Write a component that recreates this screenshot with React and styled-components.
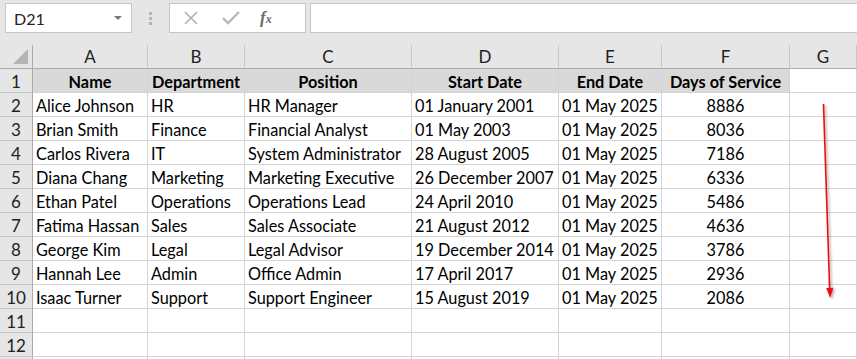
import React from "react";
import styled, { createGlobalStyle } from "styled-components";

const GlobalStyle = createGlobalStyle`
  html, body {
    margin: 0;
    padding: 0;
    background: #ffffff;
  }
  body {
    font-family: Lato, "Liberation Sans", sans-serif;
    color: #000;
    overflow: hidden;
  }
`;

const Page = styled.div`
  width: 857px;
  height: 359px;
  overflow: hidden;
  background: #fff;
`;

const Toolbar = styled.div`
  display: flex;
  align-items: flex-start;
  height: 45px;
  padding: 3px 0 0 5px;
  box-sizing: border-box;
  background: #e6e6e6;
`;

const NameBox = styled.div`
  display: flex;
  align-items: center;
  justify-content: space-between;
  width: 127px;
  height: 30px;
  box-sizing: border-box;
  padding: 0 8px 0 8px;
  background: #fff;
  border: 1px solid #c6c6c6;
  font-size: 16px;
  color: #222;
`;

const Caret = styled.span`
  width: 0;
  height: 0;
  border-left: 4px solid transparent;
  border-right: 4px solid transparent;
  border-top: 4px solid #7a7a7a;
  margin-right: 1px;
`;

const Grip = styled.div`
  display: flex;
  flex-direction: column;
  gap: 2px;
  margin: 9px 17px 0 17px;
  span {
    width: 3px;
    height: 3px;
    background: #b4b4b4;
  }
`;

const FxBox = styled.div`
  display: flex;
  align-items: center;
  width: 137px;
  height: 30px;
  box-sizing: border-box;
  background: #fff;
  border: 1px solid #c6c6c6;
  padding-left: 14px;
  gap: 24px;
  color: #a6a6a6;
`;

const FxLabel = styled.span`
  font-family: "Liberation Serif", serif;
  font-style: italic;
  font-weight: bold;
  font-size: 17px;
  color: #6b6b6b;
  margin-left: -4px;
  sub {
    font-size: 12px;
    vertical-align: baseline;
  }
`;

const FormulaInput = styled.div`
  flex: 1;
  height: 30px;
  margin-left: 4px;
  box-sizing: border-box;
  background: #fff;
  border: 1px solid #c6c6c6;
  border-right: none;
`;

const Sheet = styled.div`
  position: relative;
  display: grid;
  grid-template-columns: 33px 115px 97px 167px 147px 103px 128px 1fr;
  grid-auto-rows: 24px;
`;

const ColHead = styled.div`
  display: flex;
  align-items: center;
  justify-content: center;
  box-sizing: border-box;
  background: #e6e6e6;
  border-right: 1px solid #c8c8c8;
  border-bottom: 1px solid #ababab;
  font-size: 17px;
  color: #222;
`;

const Corner = styled(ColHead)`
  position: relative;
  border-right: 1px solid #ababab;
  &::after {
    content: "";
    position: absolute;
    right: 4px;
    bottom: 4px;
    width: 0;
    height: 0;
    border-left: 15px solid transparent;
    border-bottom: 15px solid #b4b4b4;
  }
`;

const RowHead = styled.div`
  display: flex;
  align-items: center;
  justify-content: center;
  box-sizing: border-box;
  padding-top: 1px;
  background: #e6e6e6;
  border-right: 1px solid #ababab;
  border-bottom: 1px solid #c8c8c8;
  font-size: 17px;
  color: #222;
`;

const Cell = styled.div`
  display: flex;
  align-items: center;
  justify-content: ${(p) => (p.$center ? "center" : "flex-start")};
  box-sizing: border-box;
  padding: 2px 3px 0 3px;
  white-space: nowrap;
  border-right: 1px solid #d4d4d4;
  border-bottom: 1px solid #d4d4d4;
  background: ${(p) => (p.$head ? "#d9d9d9" : "#fff")};
  font-size: ${(p) => (p.$head ? "16.3px" : "16.3px")};
  font-weight: ${(p) => (p.$head ? 700 : 400)};
  color: #000;
`;

const Arrow = styled.svg`
  position: absolute;
  left: 0;
  top: 0;
  pointer-events: none;
  overflow: visible;
`;

const columns = ["A", "B", "C", "D", "E", "F", "G"];

const headers = ["Name", "Department", "Position", "Start Date", "End Date", "Days of Service"];

const rows = [
  ["Alice Johnson", "HR", "HR Manager", "01 January 2001", "01 May 2025", "8886"],
  ["Brian Smith", "Finance", "Financial Analyst", "01 May 2003", "01 May 2025", "8036"],
  ["Carlos Rivera", "IT", "System Administrator", "28 August 2005", "01 May 2025", "7186"],
  ["Diana Chang", "Marketing", "Marketing Executive", "26 December 2007", "01 May 2025", "6336"],
  ["Ethan Patel", "Operations", "Operations Lead", "24 April 2010", "01 May 2025", "5486"],
  ["Fatima Hassan", "Sales", "Sales Associate", "21 August 2012", "01 May 2025", "4636"],
  ["George Kim", "Legal", "Legal Advisor", "19 December 2014", "01 May 2025", "3786"],
  ["Hannah Lee", "Admin", "Office Admin", "17 April 2017", "01 May 2025", "2936"],
  ["Isaac Turner", "Support", "Support Engineer", "15 August 2019", "01 May 2025", "2086"],
];

export default function App() {
  return (
    <Page>
      <GlobalStyle />
      <Toolbar>
        <NameBox>
          <span>D21</span>
          <Caret />
        </NameBox>
        <Grip>
          <span />
          <span />
          <span />
        </Grip>
        <FxBox>
          <svg width="14" height="14" viewBox="0 0 14 14">
            <path d="M1 1 L13 13 M13 1 L1 13" stroke="#b0b0b0" strokeWidth="1.6" fill="none" />
          </svg>
          <svg width="18" height="14" viewBox="0 0 18 14">
            <path d="M1 7 L6 12 L17 1" stroke="#b8b8b8" strokeWidth="2.4" fill="none" />
          </svg>
          <FxLabel>
            f<sub>x</sub>
          </FxLabel>
        </FxBox>
        <FormulaInput />
      </Toolbar>

      <Sheet>
        <Corner />
        {columns.map((c) => (
          <ColHead key={c}>{c}</ColHead>
        ))}

        <RowHead>1</RowHead>
        {headers.map((h) => (
          <Cell key={h} $head $center>
            {h}
          </Cell>
        ))}
        <Cell />

        {rows.map((r, i) => (
          <React.Fragment key={r[0]}>
            <RowHead>{i + 2}</RowHead>
            {r.map((v, j) => (
              <Cell key={j} $center={j === 5}>
                {v}
              </Cell>
            ))}
            <Cell />
          </React.Fragment>
        ))}

        {[11, 12, 13].map((n) => (
          <React.Fragment key={n}>
            <RowHead>{n < 13 ? n : null}</RowHead>
            {columns.map((c) => (
              <Cell key={c} />
            ))}
          </React.Fragment>
        ))}

        <Arrow width="857" height="314">
          <defs>
            <filter id="shadow" x="-50%" y="-10%" width="200%" height="120%">
              <feDropShadow dx="1.5" dy="1.5" stdDeviation="1" floodColor="#000" floodOpacity="0.35" />
            </filter>
          </defs>
          <g filter="url(#shadow)">
            <line x1="823.5" y1="59" x2="829.7" y2="245" stroke="#ee1111" strokeWidth="1.6" />
            <path d="M826.2 243 L833.4 242.8 L830.1 253 Z" fill="#ee1111" />
          </g>
        </Arrow>
      </Sheet>
    </Page>
  );
}
